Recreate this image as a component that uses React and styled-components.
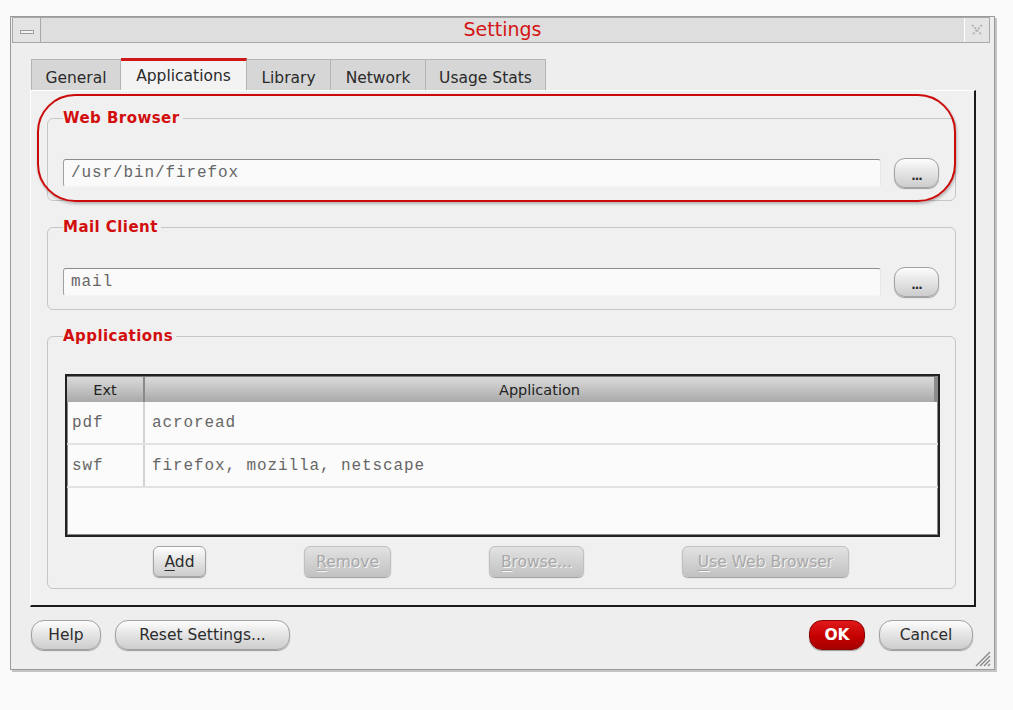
import React from "react";
import styled, { createGlobalStyle, css } from "styled-components";

const Global = createGlobalStyle`
  html, body { margin: 0; padding: 0; background: #fafafa; }
  body { font-family: "DejaVu Sans", "Liberation Sans", sans-serif; }
  * { box-sizing: border-box; }
`;

const Page = styled.div`
  padding: 16px 0 0 10px;
  width: 1013px;
  height: 710px;
`;

const Window = styled.div`
  position: relative;
  width: 985px;
  height: 654px;
  background: #eeeeee;
  border: 1px solid #9a9a9a;
  box-shadow: 2px 2px 0 #c4c4c4;
  display: flex;
  flex-direction: column;
  padding: 0 4px 0 1px;
`;

const TitleBar = styled.div`
  height: 26px;
  display: flex;
  align-items: stretch;
  background: #dedede;
  border: 1px solid #a8a8a8;
`;

const TitleBox = styled.div`
  width: ${(p) => p.$w}px;
  display: flex;
  align-items: center;
  justify-content: center;
  background: #e4e4e4;
  ${(p) => (p.$side === "left" ? "border-right: 1px solid #a8a8a8;" : "border-left: 1px solid #fff;")}
`;

const MinBar = styled.div`
  width: 14px;
  height: 4px;
  border: 1px solid #9c9c9c;
  background: #f2f2f2;
  margin-top: 3px;
`;

const Title = styled.div`
  flex: 1;
  text-align: center;
  color: #d41414;
  font-size: 19px;
  line-height: 23px;
`;

const Body = styled.div`
  flex: 1;
  display: flex;
  flex-direction: column;
  padding: 15px 17px 0 19px;
`;

const Tabs = styled.div`
  display: flex;
  align-items: flex-end;
  height: 32px;
`;

const Tab = styled.div`
  width: ${(p) => p.$w}px;
  height: ${(p) => (p.$active ? 32 : 31)}px;
  display: flex;
  align-items: center;
  justify-content: center;
  font-size: 15.5px;
  color: #2a2a2a;
  border: 1px solid #b4b4b4;
  border-bottom: none;
  border-left-width: ${(p) => (p.$first ? 1 : 0)}px;
  ${(p) =>
    p.$active
      ? css`
          background: #f3f3f3;
          border-top: 3px solid #d01818;
          padding-top: 1px;
        `
      : css`
          background: #d6d6d6;
          padding-top: 5px;
        `}
`;

const Panel = styled.div`
  position: relative;
  width: 946px;
  height: 517px;
  margin-left: -1px;
  background: #f0f0f0;
  border-top: 1px solid #ffffff;
  border-left: 1px solid #fdfdfd;
  border-right: 2px solid #1a1a1a;
  border-bottom: 2px solid #1a1a1a;
  padding: 18px 18px 0 16px;
  display: flex;
  flex-direction: column;
  gap: 17px;
`;

const Annotation = styled.div`
  position: absolute;
  left: 6px;
  top: 3px;
  width: 919px;
  height: 108px;
  border: 2.5px solid #cc0a0a;
  border-radius: 38px;
  box-shadow: 1px 2px 3px rgba(0, 0, 0, 0.25);
  pointer-events: none;
`;

const Group = styled.fieldset`
  margin: 0;
  border: 1px solid #c6c6c6;
  border-radius: 6px;
  padding: ${(p) => p.$pt}px 16px ${(p) => p.$pb}px 15px;
  min-width: 0;
  height: ${(p) => p.$h}px;
`;

const Legend = styled.legend`
  margin-left: 0;
  padding: 0 3px 0 0;
  font-weight: bold;
  font-size: 15px;
  letter-spacing: 0.45px;
  line-height: 18px;
  color: #d20d0d;
`;

const FieldRow = styled.div`
  display: flex;
  align-items: center;
  gap: 13px;
`;

const mono = css`
  font-family: "Liberation Mono", "Courier New", monospace;
  font-size: 16px;
  letter-spacing: 0.9px;
  color: #666666;
`;

const TextField = styled.div`
  flex: 1;
  height: 28px;
  background: #fafafa;
  border-top: 1px solid #8c8c8c;
  border-left: 1px solid #a0a0a0;
  border-right: 1px solid #e6e6e6;
  border-bottom: 1px solid #f4f4f4;
  border-radius: 3px;
  padding: 0 7px;
  display: flex;
  align-items: center;
  ${mono}
`;

const buttonBase = css`
  display: inline-flex;
  align-items: center;
  justify-content: center;
  font-family: "DejaVu Sans", sans-serif;
  font-size: 15.5px;
  border: 1px solid #a2a2a2;
  background: linear-gradient(#fdfdfd, #e6e6e6 45%, #cdcdcd);
  box-shadow: 0 1px 1px rgba(0, 0, 0, 0.35);
  color: #2c2c2c;
  padding: 0;
`;

const DotsButton = styled.div`
  ${buttonBase}
  width: 45px;
  height: 30px;
  border-radius: 11px;
  font-size: 12px;
  font-weight: bold;
  padding-top: 6px;
  letter-spacing: -1px;
`;

const TableBox = styled.div`
  margin-left: 2px;
  width: 875px;
  height: 163px;
  border: 2px solid #222;
  background: #fbfbfb;
  box-shadow: inset 0 0 0 1px #888;
`;

const Row = styled.div`
  display: grid;
  grid-template-columns: 78px 1fr;
  height: ${(p) => p.$h}px;
  ${(p) =>
    p.$head
      ? css`
          background: linear-gradient(#dadada, #c2c2c2 50%, #a9a9a9);
          border-right: 3px solid #8c8c8c;
          margin-right: 1px;
          border-top: 1px solid #777;
        `
      : css`
          border-bottom: 2px solid #e2e2e2;
        `}
`;

const Cell = styled.div`
  display: flex;
  align-items: center;
  ${(p) =>
    p.$head
      ? css`
          justify-content: center;
          font-size: 14.5px;
          color: #222;
        `
      : css`
          padding-left: ${p.$first ? 5 : 7}px;
          ${mono}
        `}
  ${(p) => p.$first && `border-right: 2px solid ${p.$head ? "#8a8a8a" : "#d2d2d2"};`}
`;

const ActionRow = styled.div`
  display: flex;
  justify-content: center;
  gap: 98px;
  margin-top: 9px;
`;

const ActionButton = styled.div`
  ${buttonBase}
  width: ${(p) => p.$w}px;
  height: 31px;
  border-radius: 6px;
  ${(p) =>
    p.$disabled &&
    css`
      color: #a8a8a8;
      text-shadow: 1px 1px 0 #f6f6f6;
      background: linear-gradient(#e2e2e2, #cfcfcf 60%, #c2c2c2);
      border-color: #c0c0c0;
    `}
`;

const U = styled.span`
  text-decoration: underline;
  text-underline-offset: 3px;
`;

const Footer = styled.div`
  display: flex;
  align-items: center;
  height: 30px;
  margin-top: 13px;
  gap: 14px;
`;

const Spacer = styled.div`
  flex: 1;
`;

const FooterButton = styled.div`
  ${buttonBase}
  width: ${(p) => p.$w}px;
  height: 30px;
  border-radius: 13px;
  ${(p) =>
    p.$primary &&
    css`
      background: linear-gradient(#e01a1a, #c40000 55%, #a60000);
      border-color: #8a0000;
      color: #ffffff;
      font-weight: bold;
    `}
`;

const Grip = styled.svg`
  position: absolute;
  right: 3px;
  bottom: 2px;
`;

function CloseIcon() {
  return (
    <svg width="16" height="16" viewBox="0 0 16 16">
      <g stroke="#b4b4b4" strokeWidth="2" strokeDasharray="2 1.5" fill="none">
        <path d="M3 3 L13 13" />
        <path d="M13 3 L3 13" />
      </g>
    </svg>
  );
}

export default function App() {
  return (
    <Page>
      <Global />
      <Window>
        <TitleBar>
          <TitleBox $w={28} $side="left">
            <MinBar />
          </TitleBox>
          <Title>Settings</Title>
          <TitleBox $w={25} $side="right">
            <CloseIcon />
          </TitleBox>
        </TitleBar>
        <Body>
          <Tabs>
            <Tab $w={90} $first>
              General
            </Tab>
            <Tab $w={126} $active>
              Applications
            </Tab>
            <Tab $w={84}>Library</Tab>
            <Tab $w={95}>Network</Tab>
            <Tab $w={120}>Usage Stats</Tab>
          </Tabs>
          <Panel>
            <Group $pt={31} $pb={13} $h={92}>
              <Legend>Web Browser</Legend>
              <FieldRow>
                <TextField>/usr/bin/firefox</TextField>
                <DotsButton>...</DotsButton>
              </FieldRow>
            </Group>
            <Group $pt={31} $pb={13} $h={92}>
              <Legend>Mail Client</Legend>
              <FieldRow>
                <TextField>mail</TextField>
                <DotsButton>...</DotsButton>
              </FieldRow>
            </Group>
            <Group $pt={29} $pb={10} $h={262}>
              <Legend>Applications</Legend>
              <TableBox>
                <Row $head $h={26}>
                  <Cell $head $first>
                    Ext
                  </Cell>
                  <Cell $head>Application</Cell>
                </Row>
                <Row $h={43}>
                  <Cell $first>pdf</Cell>
                  <Cell>acroread</Cell>
                </Row>
                <Row $h={43}>
                  <Cell $first>swf</Cell>
                  <Cell>firefox, mozilla, netscape</Cell>
                </Row>
              </TableBox>
              <ActionRow>
                <ActionButton $w={53}>
                  <span>
                    <U>A</U>dd
                  </span>
                </ActionButton>
                <ActionButton $w={87} $disabled>
                  <span>
                    <U>R</U>emove
                  </span>
                </ActionButton>
                <ActionButton $w={95} $disabled>
                  <span>
                    <U>B</U>rowse...
                  </span>
                </ActionButton>
                <ActionButton $w={167} $disabled>
                  <span>
                    <U>U</U>se Web Browser
                  </span>
                </ActionButton>
              </ActionRow>
            </Group>
            <Annotation />
          </Panel>
          <Footer>
            <FooterButton $w={70}>Help</FooterButton>
            <FooterButton $w={175}>Reset Settings...</FooterButton>
            <Spacer />
            <FooterButton $w={56} $primary>
              OK
            </FooterButton>
            <FooterButton $w={94}>Cancel</FooterButton>
          </Footer>
        </Body>
        <Grip width="18" height="18" viewBox="0 0 18 18">
          <g stroke="#8a8a8a" strokeWidth="1.5">
            <path d="M17 3 L3 17" />
            <path d="M17 7 L7 17" />
            <path d="M17 11 L11 17" />
            <path d="M17 15 L15 17" />
          </g>
        </Grip>
      </Window>
    </Page>
  );
}
